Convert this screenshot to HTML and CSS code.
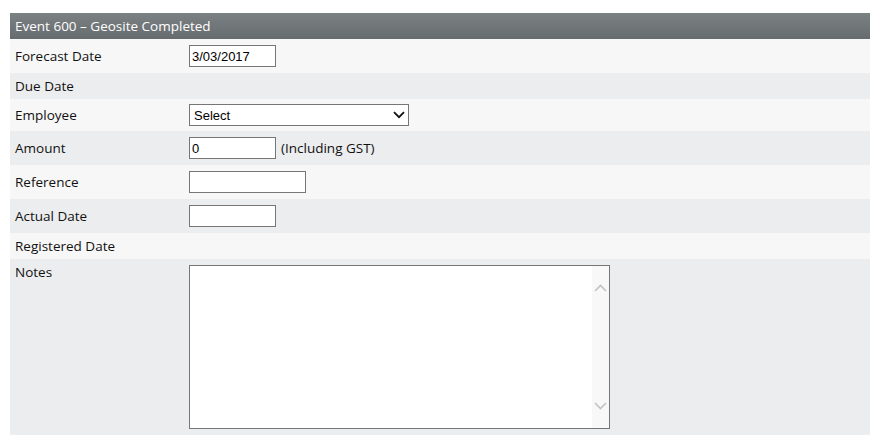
FILE: index.html
```html
<!DOCTYPE html>
<html>
<head>
<meta charset="utf-8">
<link rel="stylesheet" href="styles.css">
</head>
<body>
<div class="panel">
  <div class="panel-head">Event 600 – Geosite Completed</div>
  <div class="row light h34">
    <div class="label">Forecast Date</div>
    <div class="field"><input class="txt w87" type="text" value="3/03/2017"></div>
  </div>
  <div class="row gray h26">
    <div class="label">Due Date</div>
    <div class="field"></div>
  </div>
  <div class="row light h32">
    <div class="label">Employee</div>
    <div class="field">
      <div class="select">
        <span>Select</span>
        <svg class="caret" width="12" height="8" viewBox="0 0 12 8"><path d="M1 1.2 L6 6.2 L11 1.2" fill="none" stroke="#111" stroke-width="1.8"/></svg>
      </div>
    </div>
  </div>
  <div class="row gray h34">
    <div class="label">Amount</div>
    <div class="field"><input class="txt w87" type="text" value="0"><span class="hint">(Including GST)</span></div>
  </div>
  <div class="row light h34">
    <div class="label">Reference</div>
    <div class="field"><input class="txt w117" type="text" value=""></div>
  </div>
  <div class="row gray h34">
    <div class="label">Actual Date</div>
    <div class="field"><input class="txt w87" type="text" value=""></div>
  </div>
  <div class="row light h26">
    <div class="label">Registered Date</div>
    <div class="field"></div>
  </div>
  <div class="row gray notes">
    <div class="label">Notes</div>
    <div class="field">
      <div class="area">
        <textarea class="area-text"></textarea>
        <div class="scroll">
          <svg width="13" height="8" viewBox="0 0 13 8"><path d="M1 7 L6.5 1.5 L12 7" fill="none" stroke="#c2c2c2" stroke-width="1.6"/></svg>
          <svg width="13" height="8" viewBox="0 0 13 8"><path d="M1 1 L6.5 6.5 L12 1" fill="none" stroke="#c2c2c2" stroke-width="1.6"/></svg>
        </div>
      </div>
    </div>
  </div>
</div>
</body>
</html>
```

FILE: styles.css
```css
html, body {
  margin: 0;
  padding: 0;
  background: #ffffff;
}
body {
  padding: 13px 8px 0 10px;
  font-family: "Open Sans", "DejaVu Sans", sans-serif;
  font-size: 13.5px;
  color: #111;
}
.panel {
  width: 860px;
}
.panel-head {
  height: 26px;
  line-height: 26px;
  padding-left: 5px;
  color: #ffffff;
  background: linear-gradient(to bottom, #7c8184, #666b6f);
}
.row {
  display: grid;
  grid-template-columns: 179px 1fr;
  align-items: center;
}
.light { background: #f7f7f7; }
.gray { background: #ecedef; }
.h34 { height: 34px; }
.h32 { height: 32px; }
.h26 { height: 26px; }
.label {
  padding-left: 5px;
  line-height: 18px;
}
.field {
  display: flex;
  align-items: center;
}
.txt {
  box-sizing: border-box;
  height: 22px;
  margin: 0;
  padding: 1px 2px;
  border: 1px solid #767676;
  border-radius: 0;
  background: #fff;
  font-family: "Liberation Sans", Arial, sans-serif;
  font-size: 13px;
  color: #000;
  outline: none;
}
.w87 { width: 87px; }
.w117 { width: 117px; }
.hint {
  margin-left: 5px;
}
.select {
  box-sizing: border-box;
  width: 220px;
  height: 22px;
  border: 1px solid #767676;
  background: #fff;
  display: flex;
  align-items: center;
  justify-content: space-between;
  padding: 0 3px 0 4px;
  font-family: "Liberation Sans", Arial, sans-serif;
  font-size: 13px;
  color: #000;
}
.notes {
  height: 176px;
  align-items: start;
}
.notes .label {
  padding-top: 4px;
}
.notes .field {
  padding-top: 6px;
}
.area {
  box-sizing: border-box;
  width: 421px;
  height: 164px;
  border: 1px solid #767676;
  background: #fff;
  display: flex;
}
.area-text {
  flex: 1;
  border: 0;
  margin: 0;
  padding: 2px;
  resize: none;
  outline: none;
  background: #fff;
}
.scroll {
  width: 17px;
  background: #f8f8f8;
  display: flex;
  flex-direction: column;
  align-items: center;
  justify-content: space-between;
  padding: 18px 0 18px 0;
}
```
